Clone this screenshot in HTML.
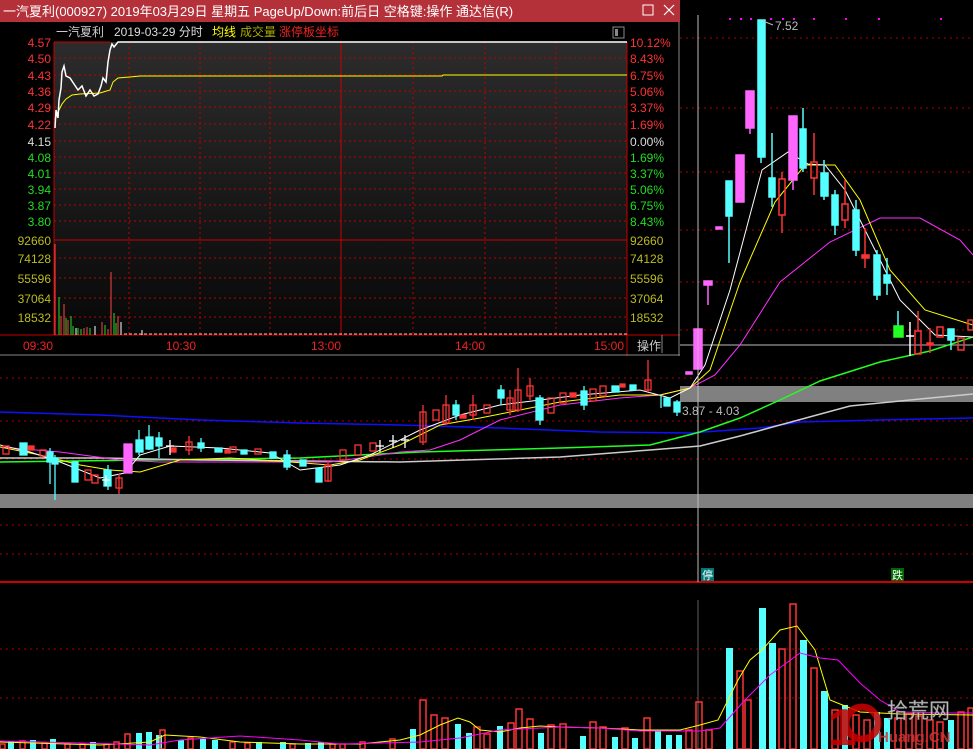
<!DOCTYPE html>
<html><head><meta charset="utf-8"><style>
body{margin:0;background:#000;width:973px;height:749px;overflow:hidden;font-family:"Liberation Sans","Noto Sans CJK SC",sans-serif}
svg{position:absolute;left:0;top:0}
</style></head><body>
<svg width="973" height="749" viewBox="0 0 973 749" xmlns="http://www.w3.org/2000/svg" font-family="Liberation Sans, Noto Sans CJK SC, sans-serif">
<defs>
<linearGradient id="g" x1="0" y1="0" x2="0" y2="1"><stop offset="0" stop-color="#2c2c2c"/><stop offset="1" stop-color="#080808"/></linearGradient>
</defs>
<rect width="973" height="749" fill="#000"/>
<g stroke="#a00" stroke-dasharray="2,4" stroke-width="1">
<line x1="680" y1="38" x2="973" y2="38"/><line x1="680" y1="108" x2="973" y2="108"/><line x1="680" y1="172" x2="973" y2="172"/><line x1="680" y1="230" x2="973" y2="230"/><line x1="680" y1="282" x2="973" y2="282"/><line x1="680" y1="330" x2="973" y2="330"/>
<line x1="0" y1="378" x2="973" y2="378"/><line x1="0" y1="421" x2="973" y2="421"/><line x1="0" y1="459" x2="973" y2="459"/><line x1="0" y1="525" x2="973" y2="525"/><line x1="0" y1="554" x2="973" y2="554"/>
<line x1="0" y1="649" x2="973" y2="649"/><line x1="0" y1="698" x2="973" y2="698"/>
</g>
<line x1="0" y1="582" x2="973" y2="582" stroke="#c00" stroke-width="2"/>
<rect x="680" y="386" width="293" height="16" fill="#808080"/>
<rect x="0" y="494" width="973" height="14" fill="#808080"/>
<line x1="680" y1="345" x2="973" y2="345" stroke="#bbb"/>
<g fill="none" stroke-width="1.5">
<polyline stroke="#1010ff" points="0,412 100,415 200,420 300,423 400,425 500,428 600,432 690,433 760,428 800,422 880,420 973,418"/>
<polyline stroke="#20ff20" points="0,462 150,460 300,458 420,452 560,448 650,445 700,432 740,418 780,400 820,381 880,362 930,351 973,337"/>
<polyline stroke="#ccc" points="0,458 100,458 200,460 400,462 560,457 650,450 700,446 740,436 780,425 850,406 920,399 973,394"/>
<polyline stroke="#ff30ff" stroke-width="1" points="0,447 60,452 120,460 160,462 220,462 300,462 330,462 360,458 400,452 430,450 460,440 500,420 560,405 620,398 660,395 690,388 715,375 740,345 780,282 830,242 880,218 920,218 960,240 973,255"/>
<polyline stroke="#ff0" stroke-width="1" points="0,447 40,455 80,465 110,470 140,472 180,460 230,458 290,462 330,465 360,460 400,445 440,425 480,418 520,410 560,402 620,395 660,395 690,388 710,370 740,282 775,202 805,165 835,165 860,200 890,270 925,310 973,325"/>
<polyline stroke="#fff" stroke-width="1" points="0,445 30,452 60,462 100,478 125,473 140,455 170,446 220,448 270,453 300,470 340,465 370,455 420,430 460,415 500,405 540,400 580,395 640,390 670,398 690,388 705,365 730,290 746,230 762,170 788,152 808,164 825,165 845,190 880,260 900,300 935,335 973,337"/>
</g>
<g stroke-width="1.3">
<g fill="#5ff" stroke="#5ff">
<rect x="20" y="443" width="7" height="12"/><rect x="47" y="452" width="6" height="10"/><line x1="50" y1="448" x2="50" y2="484"/>
<rect x="52" y="458" width="6" height="6"/><rect x="72" y="462" width="6" height="20"/><line x1="55" y1="455" x2="55" y2="500"/>
<rect x="104" y="470" width="7" height="16"/><line x1="108" y1="465" x2="108" y2="490"/>
<rect x="136" y="440" width="7" height="12"/><line x1="139" y1="430" x2="139" y2="455"/><line x1="149" y1="425" x2="149" y2="450"/>
<rect x="146" y="437" width="7" height="12"/><rect x="156" y="438" width="6" height="8"/><line x1="159" y1="432" x2="159" y2="458"/>
<rect x="198" y="443" width="6" height="5"/><line x1="201" y1="438" x2="201" y2="452"/>
<rect x="215" y="448" width="7" height="4"/><rect x="241" y="450" width="6" height="4"/>
<rect x="270" y="452" width="6" height="6"/><rect x="284" y="455" width="6" height="12"/><line x1="287" y1="450" x2="287" y2="470"/>
<rect x="300" y="460" width="6" height="6"/><rect x="316" y="468" width="6" height="14"/>
<rect x="453" y="405" width="6" height="10"/><line x1="456" y1="400" x2="456" y2="420"/>
<rect x="498" y="390" width="6" height="8"/><line x1="501" y1="385" x2="501" y2="405"/>
<rect x="536" y="398" width="7" height="22"/><line x1="540" y1="395" x2="540" y2="425"/>
<rect x="581" y="391" width="6" height="14"/><line x1="584" y1="386" x2="584" y2="410"/>
<rect x="612" y="386" width="7" height="6"/><rect x="630" y="385" width="6" height="5"/>
<line x1="661" y1="395" x2="661" y2="408"/><rect x="664" y="398" width="6" height="8"/>
<rect x="674" y="402" width="6" height="10"/><line x1="677" y1="400" x2="677" y2="416"/>
</g>
<g fill="none" stroke="#f33">
<rect x="3" y="446" width="6" height="8"/><rect x="40" y="450" width="6" height="6"/><rect x="92" y="475" width="6" height="8"/><rect x="85" y="470" width="6" height="10"/>
<rect x="116" y="478" width="6" height="10"/><line x1="119" y1="474" x2="119" y2="494"/>
<rect x="186" y="442" width="6" height="8"/><line x1="189" y1="436" x2="189" y2="455"/>
<rect x="230" y="447" width="6" height="5"/><rect x="255" y="449" width="6" height="5"/>
<rect x="325" y="465" width="6" height="16"/><line x1="328" y1="460" x2="328" y2="482"/>
<rect x="340" y="450" width="6" height="10"/><rect x="355" y="445" width="6" height="10"/><rect x="370" y="443" width="6" height="8"/>
<rect x="420" y="412" width="6" height="30"/><line x1="423" y1="405" x2="423" y2="445"/>
<rect x="433" y="410" width="6" height="10"/><rect x="443" y="405" width="6" height="18"/><line x1="446" y1="395" x2="446" y2="425"/>
<rect x="470" y="405" width="6" height="10"/><line x1="473" y1="395" x2="473" y2="420"/>
<rect x="484" y="405" width="6" height="8"/><rect x="507" y="398" width="6" height="12"/><line x1="510" y1="390" x2="510" y2="415"/>
<rect x="515" y="390" width="6" height="20"/><line x1="518" y1="368" x2="518" y2="412"/>
<rect x="527" y="386" width="6" height="10"/><line x1="530" y1="378" x2="530" y2="400"/>
<rect x="548" y="398" width="6" height="15"/><rect x="560" y="393" width="6" height="10"/>
<rect x="590" y="389" width="6" height="12"/><rect x="600" y="386" width="6" height="10"/>
<rect x="645" y="380" width="6" height="10"/><line x1="648" y1="360" x2="648" y2="392"/>
</g>
<g fill="#f33" stroke="#f33">
<rect x="28" y="446" width="6" height="4"/><rect x="170" y="448" width="6" height="4"/><rect x="225" y="450" width="5" height="3"/>
<rect x="460" y="415" width="6" height="3"/><rect x="570" y="393" width="6" height="4"/><rect x="620" y="384" width="5" height="3"/>
</g>
<rect x="124" y="444" width="8" height="29" fill="#f6f" stroke="#f6f"/>
<g stroke="#fff">
<line x1="170" y1="440" x2="170" y2="455"/><line x1="166" y1="446" x2="174" y2="446"/>
<line x1="106" y1="475" x2="106" y2="486"/><line x1="102" y1="480" x2="110" y2="480"/>
<line x1="393" y1="435" x2="393" y2="448"/><line x1="389" y1="441" x2="397" y2="441"/>
<line x1="405" y1="435" x2="405" y2="448"/><line x1="401" y1="440" x2="409" y2="440"/>
<line x1="380" y1="440" x2="380" y2="452"/><line x1="376" y1="446" x2="384" y2="446"/>
</g>
</g>
<g stroke-width="1.5">
<g fill="#f6f" stroke="#f6f">
<rect x="694" y="329" width="8" height="40"/><rect x="686" y="372" width="6" height="2"/><rect x="704" y="281" width="8" height="4"/><line x1="708" y1="285" x2="708" y2="305"/>
<rect x="716" y="227" width="6" height="2"/><rect x="736" y="155" width="8" height="47"/><rect x="746" y="91" width="8" height="37"/><line x1="750" y1="128" x2="750" y2="134"/>
<rect x="789" y="116" width="8" height="64"/><line x1="793" y1="180" x2="793" y2="190"/>
</g>
<g fill="#5ff" stroke="#5ff">
<rect x="726" y="181" width="6" height="35"/><line x1="729" y1="216" x2="729" y2="263"/>
<rect x="758" y="20" width="7" height="137"/><line x1="761" y1="157" x2="761" y2="163"/>
<rect x="769" y="178" width="6" height="19"/><line x1="772" y1="133" x2="772" y2="207"/>
<rect x="800" y="129" width="6" height="39"/><line x1="803" y1="108" x2="803" y2="172"/>
<rect x="821" y="173" width="7" height="23"/><line x1="824" y1="160" x2="824" y2="200"/>
<rect x="832" y="195" width="6" height="30"/><line x1="835" y1="190" x2="835" y2="235"/>
<rect x="853" y="210" width="6" height="40"/><line x1="856" y1="200" x2="856" y2="256"/>
<rect x="874" y="255" width="6" height="40"/><line x1="877" y1="250" x2="877" y2="300"/>
<rect x="884" y="275" width="6" height="8"/><line x1="887" y1="258" x2="887" y2="295"/>
<rect x="948" y="329" width="6" height="11"/><line x1="951" y1="340" x2="951" y2="350"/>
<line x1="898" y1="311" x2="898" y2="326"/>
</g>
<rect x="894" y="326" width="9" height="11" fill="#2f2" stroke="#2f2"/>
<g fill="none" stroke="#f33">
<rect x="779" y="179" width="6" height="36"/><line x1="782" y1="172" x2="782" y2="179"/><line x1="782" y1="215" x2="782" y2="233"/>
<rect x="811" y="162" width="6" height="16"/><line x1="814" y1="133" x2="814" y2="162"/><line x1="814" y1="178" x2="814" y2="195"/>
<rect x="842" y="204" width="6" height="16"/><line x1="845" y1="180" x2="845" y2="204"/><line x1="845" y1="220" x2="845" y2="228"/>
<rect x="915" y="331" width="6" height="23"/><line x1="918" y1="311" x2="918" y2="331"/>
<rect x="937" y="327" width="6" height="10"/><rect x="958" y="338" width="6" height="12"/><rect x="968" y="320" width="5" height="10"/>
</g>
<g fill="#f33" stroke="#f33"><rect x="862" y="255" width="7" height="3"/><line x1="865" y1="228" x2="865" y2="268"/><line x1="930" y1="328" x2="930" y2="353"/><rect x="927" y="343" width="6" height="2"/></g>
<g stroke="#fff"><line x1="910" y1="322" x2="910" y2="356"/><line x1="906" y1="336" x2="914" y2="336"/></g>
</g>
<g fill="#f0f"><rect x="729" y="18" width="2" height="2"/><rect x="740" y="18" width="2" height="2"/><rect x="750" y="18" width="2" height="2"/><rect x="770" y="18" width="2" height="2"/><rect x="782" y="18" width="2" height="2"/><rect x="793" y="18" width="2" height="2"/><rect x="813" y="18" width="2" height="2"/><rect x="845" y="18" width="2" height="2"/><rect x="878" y="18" width="2" height="2"/><rect x="940" y="18" width="2" height="2"/></g>
<text x="775" y="30" fill="#bbb" font-size="12">7.52</text>
<line x1="763" y1="21" x2="773" y2="25" stroke="#bbb"/>
<text x="682" y="415" fill="#bbb" font-size="12">3.87 - 4.03</text>
<line x1="698" y1="15" x2="698" y2="582" stroke="#bbb"/>
<rect x="701" y="568" width="13" height="13" fill="#077"/><text x="702" y="579" fill="#fff" font-size="11">停</text>
<rect x="891" y="568" width="13" height="13" fill="#060"/><text x="892" y="579" fill="#fff" font-size="11">跌</text>
<line x1="698" y1="600" x2="698" y2="749" stroke="#999" stroke-width="0.6"/>
<g stroke-width="1.5">
<g fill="#5ff">
<rect x="8" y="741" width="6" height="8"/><rect x="30" y="740" width="6" height="9"/><rect x="50" y="739" width="6" height="10"/><rect x="90" y="742" width="6" height="7"/><rect x="136" y="733" width="6" height="16"/><rect x="146" y="732" width="6" height="17"/><rect x="156" y="735" width="6" height="14"/><rect x="178" y="740" width="6" height="9"/><rect x="200" y="739" width="6" height="10"/><rect x="212" y="740" width="6" height="9"/><rect x="256" y="742" width="6" height="7"/><rect x="280" y="742" width="6" height="7"/><rect x="305" y="743" width="6" height="6"/><rect x="318" y="742" width="6" height="7"/><rect x="410" y="729" width="6" height="20"/><rect x="455" y="724" width="6" height="25"/><rect x="466" y="733" width="6" height="16"/><rect x="497" y="726" width="6" height="23"/><rect x="538" y="733" width="6" height="16"/><rect x="580" y="736" width="6" height="13"/><rect x="612" y="737" width="6" height="12"/><rect x="632" y="738" width="6" height="11"/><rect x="655" y="730" width="6" height="19"/><rect x="666" y="735" width="6" height="14"/><rect x="676" y="735" width="6" height="14"/>
<rect x="726" y="648" width="7" height="101"/><rect x="759" y="608" width="7" height="141"/><rect x="769" y="643" width="7" height="106"/><rect x="800" y="640" width="7" height="109"/><rect x="821" y="691" width="7" height="58"/><rect x="842" y="705" width="6" height="44"/><rect x="874" y="712" width="6" height="37"/><rect x="884" y="718" width="6" height="31"/><rect x="948" y="720" width="6" height="29"/>
</g>
<g fill="none" stroke="#f33">
<rect x="0" y="744" width="5" height="5"/><rect x="20" y="741" width="5" height="8"/><rect x="42" y="743" width="5" height="6"/><rect x="65" y="744" width="5" height="5"/><rect x="80" y="744" width="5" height="5"/><rect x="104" y="744" width="5" height="5"/><rect x="114" y="742" width="5" height="7"/><rect x="125" y="734" width="5" height="15"/><rect x="160" y="730" width="5" height="19"/><rect x="188" y="738" width="5" height="11"/><rect x="230" y="742" width="5" height="7"/><rect x="245" y="743" width="5" height="6"/><rect x="290" y="744" width="5" height="5"/><rect x="330" y="744" width="5" height="5"/><rect x="340" y="744" width="5" height="5"/><rect x="360" y="742" width="5" height="7"/><rect x="390" y="739" width="5" height="10"/>
<rect x="420" y="700" width="6" height="49"/><rect x="431" y="715" width="6" height="34"/><rect x="442" y="718" width="6" height="31"/><rect x="474" y="727" width="6" height="22"/><rect x="484" y="734" width="6" height="15"/><rect x="508" y="723" width="6" height="26"/><rect x="516" y="709" width="6" height="40"/><rect x="527" y="719" width="6" height="30"/><rect x="548" y="725" width="6" height="24"/><rect x="560" y="724" width="6" height="25"/><rect x="590" y="722" width="6" height="27"/><rect x="600" y="727" width="6" height="22"/><rect x="622" y="728" width="6" height="21"/><rect x="644" y="718" width="6" height="31"/><rect x="686" y="730" width="6" height="19"/><rect x="696" y="702" width="6" height="47"/><rect x="706" y="730" width="6" height="19"/>
<rect x="737" y="671" width="6" height="78"/><rect x="745" y="700" width="6" height="49"/><rect x="779" y="649" width="6" height="100"/><rect x="790" y="604" width="6" height="145"/><rect x="811" y="668" width="6" height="81"/><rect x="832" y="710" width="6" height="39"/><rect x="853" y="715" width="6" height="34"/><rect x="864" y="720" width="6" height="29"/><rect x="895" y="718" width="6" height="31"/><rect x="906" y="714" width="6" height="35"/><rect x="916" y="716" width="6" height="33"/><rect x="927" y="720" width="6" height="29"/><rect x="937" y="722" width="6" height="27"/><rect x="958" y="712" width="6" height="37"/><rect x="968" y="708" width="5" height="41"/>
</g>
</g>
<polyline fill="none" stroke="#ff0" stroke-width="1" points="0,742 100,745 150,742 165,735 200,737 240,742 300,744 360,744 400,740 420,735 440,725 458,718 470,722 480,730 500,732 520,728 540,726 560,727 600,728 640,730 680,730 700,725 718,720 738,680 750,660 762,650 780,630 797,626 815,650 830,700 860,712 900,714 973,715"/>
<polyline fill="none" stroke="#f0f" stroke-width="1" points="0,741 80,743 150,745 180,740 240,736 300,740 340,744 420,742 460,738 500,730 560,727 600,728 640,731 700,731 720,728 745,700 770,675 800,653 820,658 838,660 860,683 880,700 900,712 940,713 973,713"/>
<g opacity="0.85">
<text x="828" y="745" fill="#c00" font-size="52" font-weight="bold" font-family="Liberation Sans, sans-serif">1</text>
<circle cx="862" cy="723" r="16" fill="none" stroke="#c00" stroke-width="7"/>
<text x="887" y="718" fill="#ddd" font-size="21" font-family="Noto Sans CJK SC, sans-serif" stroke="#888" stroke-width="0.5">拾荒网</text>
<text x="878" y="742" fill="#c33" font-size="15" font-weight="bold">Huang.CN</text>
</g>

<rect x="0" y="0" width="680" height="356" fill="#000"/>
<rect x="0" y="0" width="680" height="22" fill="#b5313a"/>
<text x="3" y="16" fill="#fff" font-size="13">一汽夏利(000927) 2019年03月29日 星期五 PageUp/Down:前后日 空格键:操作 通达信(R)</text>
<rect x="643" y="5" width="10" height="10" fill="none" stroke="#fff"/>
<path d="M664 5 L674 15 M674 5 L664 15" stroke="#fff" stroke-width="1.2"/>
<rect x="54" y="42" width="573" height="293" fill="url(#g)"/>
<text x="56" y="36" fill="#ccc" font-size="12">一汽夏利</text>
<text x="114" y="36" fill="#ddd" font-size="12">2019-03-29 分时</text>
<text x="212" y="36" fill="#ff0" font-size="12">均线</text>
<text x="240" y="36" fill="#aa0" font-size="12">成交量</text>
<text x="279" y="36" fill="#e22" font-size="12">涨停板坐标</text>
<rect x="613" y="27" width="11" height="11" fill="none" stroke="#888"/><rect x="615" y="29" width="3" height="7" fill="#888"/>
<g stroke="#b00" stroke-dasharray="2,3">
<line x1="54" y1="58" x2="627" y2="58"/><line x1="54" y1="75" x2="627" y2="75"/><line x1="54" y1="91" x2="627" y2="91"/><line x1="54" y1="107" x2="627" y2="107"/><line x1="54" y1="124" x2="627" y2="124"/><line x1="54" y1="141" x2="627" y2="141"/><line x1="54" y1="157" x2="627" y2="157"/><line x1="54" y1="173" x2="627" y2="173"/><line x1="54" y1="189" x2="627" y2="189"/><line x1="54" y1="205" x2="627" y2="205"/><line x1="54" y1="221" x2="627" y2="221"/>
<line x1="54" y1="258" x2="627" y2="258"/><line x1="54" y1="278" x2="627" y2="278"/><line x1="54" y1="298" x2="627" y2="298"/><line x1="54" y1="317" x2="627" y2="317"/>
<line x1="129" y1="42" x2="129" y2="335"/><line x1="200" y1="42" x2="200" y2="335"/><line x1="270" y1="42" x2="270" y2="335"/><line x1="413" y1="42" x2="413" y2="335"/><line x1="485" y1="42" x2="485" y2="335"/><line x1="556" y1="42" x2="556" y2="335"/>
</g>
<g stroke="#c00"><line x1="54" y1="240" x2="627" y2="240"/><line x1="341" y1="42" x2="341" y2="335"/><line x1="54" y1="42" x2="54" y2="335"/><line x1="627" y1="42" x2="627" y2="356"/><line x1="0" y1="335" x2="680" y2="335"/><line x1="54" y1="42" x2="110" y2="42"/></g>
<line x1="679" y1="22" x2="679" y2="356" stroke="#888"/><line x1="0" y1="355" x2="680" y2="355" stroke="#888"/>
<line x1="662" y1="335" x2="662" y2="353" stroke="#888"/>
<polyline fill="none" stroke="#ff0" stroke-width="1" points="55,120 58,112 62,104 66,99 72,95 80,94 100,93 110,90 113,82 118,78 130,77 140,76 442,76 443,75 627,75"/>
<polyline fill="none" stroke="#fff" stroke-width="1.5" points="55,128 56,110 58,118 59,100 61,88 62,72 64,66 66,76 70,78 74,84 78,90 82,86 86,96 90,90 94,96 98,94 101,86 103,78 106,82 108,62 110,50 112,44 114,47 118,42 627,42"/>
<g stroke-width="1">
<line x1="55" y1="244" x2="55" y2="335" stroke="#f44"/><line x1="59" y1="297" x2="59" y2="335" stroke="#2d2"/><line x1="61" y1="316" x2="61" y2="335" stroke="#f44"/><line x1="64" y1="304" x2="64" y2="335" stroke="#f44"/><line x1="66" y1="318" x2="66" y2="335" stroke="#2d2"/><line x1="68" y1="320" x2="68" y2="335" stroke="#f44"/><line x1="71" y1="316" x2="71" y2="335" stroke="#2d2"/><line x1="73" y1="326" x2="73" y2="335" stroke="#2d2"/><line x1="76" y1="328" x2="76" y2="335" stroke="#fff"/><line x1="78" y1="328" x2="78" y2="335" stroke="#2d2"/><line x1="81" y1="329" x2="81" y2="335" stroke="#2d2"/><line x1="84" y1="328" x2="84" y2="335" stroke="#f44"/><line x1="87" y1="327" x2="87" y2="335" stroke="#f44"/><line x1="90" y1="328" x2="90" y2="335" stroke="#2d2"/><line x1="95" y1="326" x2="95" y2="335" stroke="#fff"/><line x1="102" y1="322" x2="102" y2="335" stroke="#f44"/><line x1="105" y1="325" x2="105" y2="335" stroke="#2d2"/><line x1="108" y1="329" x2="108" y2="335" stroke="#f44"/><line x1="111" y1="272" x2="111" y2="335" stroke="#f44"/><line x1="114" y1="313" x2="114" y2="335" stroke="#2d2"/><line x1="116" y1="323" x2="116" y2="335" stroke="#2d2"/><line x1="118" y1="316" x2="118" y2="335" stroke="#f44"/><line x1="121" y1="322" x2="121" y2="335" stroke="#fff"/><line x1="142" y1="330" x2="142" y2="335" stroke="#fff"/>
</g>
<line x1="124" y1="334" x2="627" y2="334" stroke="#ccc" stroke-dasharray="3,2" stroke-width="1"/>
<g font-size="12" text-anchor="end">
<text x="51" y="47" fill="#f33">4.57</text><text x="51" y="63" fill="#f33">4.50</text><text x="51" y="80" fill="#f33">4.43</text><text x="51" y="96" fill="#f33">4.36</text><text x="51" y="112" fill="#f33">4.29</text><text x="51" y="129" fill="#f33">4.22</text><text x="51" y="146" fill="#ddd">4.15</text><text x="51" y="162" fill="#2d2">4.08</text><text x="51" y="178" fill="#2d2">4.01</text><text x="51" y="194" fill="#2d2">3.94</text><text x="51" y="210" fill="#2d2">3.87</text><text x="51" y="226" fill="#2d2">3.80</text>
<text x="51" y="245" fill="#bb2">92660</text><text x="51" y="263" fill="#bb2">74128</text><text x="51" y="283" fill="#bb2">55596</text><text x="51" y="303" fill="#bb2">37064</text><text x="51" y="322" fill="#bb2">18532</text>
</g>
<g font-size="12">
<text x="630" y="47" fill="#f33">10.12%</text><text x="630" y="63" fill="#f33">8.43%</text><text x="630" y="80" fill="#f33">6.75%</text><text x="630" y="96" fill="#f33">5.06%</text><text x="630" y="112" fill="#f33">3.37%</text><text x="630" y="129" fill="#f33">1.69%</text><text x="630" y="146" fill="#ddd">0.00%</text><text x="630" y="162" fill="#2d2">1.69%</text><text x="630" y="178" fill="#2d2">3.37%</text><text x="630" y="194" fill="#2d2">5.06%</text><text x="630" y="210" fill="#2d2">6.75%</text><text x="630" y="226" fill="#2d2">8.43%</text>
<text x="630" y="245" fill="#bb2">92660</text><text x="630" y="263" fill="#bb2">74128</text><text x="630" y="283" fill="#bb2">55596</text><text x="630" y="303" fill="#bb2">37064</text><text x="630" y="322" fill="#bb2">18532</text>
<text x="23" y="350" fill="#e22">09:30</text><text x="166" y="350" fill="#e22">10:30</text><text x="311" y="350" fill="#e22">13:00</text><text x="455" y="350" fill="#e22">14:00</text><text x="594" y="350" fill="#e22">15:00</text>
<text x="637" y="350" fill="#ccc">操作</text>
</g>
</svg>
</body></html>
